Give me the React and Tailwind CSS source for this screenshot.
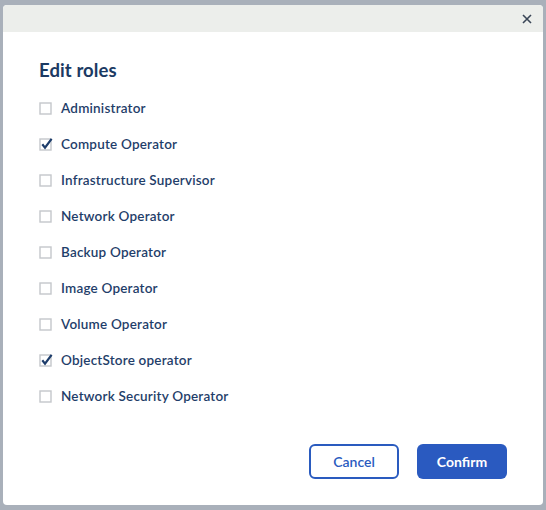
import React, { useState } from 'react';

const ROLES = [
  { name: 'Administrator', checked: false },
  { name: 'Compute Operator', checked: true },
  { name: 'Infrastructure Supervisor', checked: false },
  { name: 'Network Operator', checked: false },
  { name: 'Backup Operator', checked: false },
  { name: 'Image Operator', checked: false },
  { name: 'Volume Operator', checked: false },
  { name: 'ObjectStore operator', checked: true },
  { name: 'Network Security Operator', checked: false },
];

const Box = ({ checked }) => (
  <svg width="15" height="15" viewBox="0 0 15 15" className="shrink-0">
    <rect x="1" y="2" width="11" height="11" fill="#fff" stroke="#c4c7cb" strokeWidth="1.4" />
    {checked && <path d="M3.3 7.3 L6 10.6 L12.6 1.8" fill="none" stroke="#1d3d6b" strokeWidth="2.2" />}
  </svg>
);

export default function App() {
  const [roles, setRoles] = useState(ROLES);

  return (
    <div className="w-[546px] h-[510px] bg-[#a9b0ba] pt-[5px] px-[3px] font-['Lato',sans-serif]">
      <div className="h-[500px] bg-white rounded-[4px] overflow-hidden flex flex-col">
        <div className="h-[27px] bg-[#eceeeb] flex items-center justify-end pr-[11px]">
          <svg width="10" height="10" viewBox="0 0 10 10">
            <path d="M1 1 L9 9 M9 1 L1 9" stroke="#3a4657" strokeWidth="1.6" />
          </svg>
        </div>
        <div className="flex-1 px-[36px] pt-[26px] flex flex-col">
          <h2 className="text-[18.5px] font-bold text-[#1b3a63] leading-[24px] tracking-[0.1px]">Edit roles</h2>
          <div className="mt-[8px] flex flex-col">
            {roles.map((r, i) => (
              <label
                key={r.name}
                className="h-[36px] flex items-center gap-[7px] cursor-pointer"
                onClick={() => setRoles(roles.map((x, j) => (j === i ? { ...x, checked: !x.checked } : x)))}
              >
                <Box checked={r.checked} />
                <span className="text-[13.5px] font-semibold text-[#1f3e6a] tracking-[0.2px]">{r.name}</span>
              </label>
            ))}
          </div>
          <div className="mt-auto mb-[26px] flex justify-end gap-[18px]">
            <button className="w-[90px] h-[35px] rounded-[6px] border-2 border-[#2a5bbf] text-[#2a5bbf] text-[14px] font-semibold bg-white pb-[1px]">
              Cancel
            </button>
            <button className="w-[90px] h-[35px] rounded-[6px] bg-[#2a5ac0] text-white text-[14px] font-bold pb-[1px]">
              Confirm
            </button>
          </div>
        </div>
      </div>
    </div>
  );
}
